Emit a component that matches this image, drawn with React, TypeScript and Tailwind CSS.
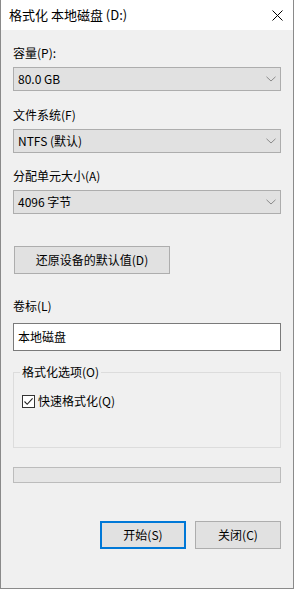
const font = { fontFamily: '"Noto Sans CJK SC", "Noto Sans", sans-serif' };

function Chevron() {
  return (
    <svg width="10" height="6" viewBox="0 0 10 6" className="text-[#8a8a8a]">
      <path d="M0.5 0.8 L5 5 L9.5 0.8" fill="none" stroke="currentColor" strokeWidth="1" />
    </svg>
  );
}

function Combo({ value, className = '' }: { value: string; className?: string }) {
  return (
    <div
      className={`flex h-[24px] items-center justify-between border border-[#adadad] bg-[#e1e1e1] pl-[4px] pr-[4px] ${className}`}
    >
      <span className="leading-[16px]">{value}</span>
      <Chevron />
    </div>
  );
}

function Field({ label, value, className = '' }: { label: string; value: string; className?: string }) {
  return (
    <div className={className}>
      <div className="leading-[16px]">{label}</div>
      <Combo value={value} className="mt-[6px]" />
    </div>
  );
}

function Btn({ label, primary = false }: { label: string; primary?: boolean }) {
  return (
    <button
      className={`flex h-[28px] w-[86px] items-center justify-center bg-[#e1e1e1] leading-[16px] ${
        primary ? 'border-2 border-[#0078d7]' : 'border border-[#adadad]'
      }`}
    >
      {label}
    </button>
  );
}

export default function App() {
  return (
    <div
      className="flex h-[589px] w-[294px] flex-col border-x border-b border-[#8a8a8a] bg-[#f0f0f0] text-[12px] text-black"
      style={font}
    >
      {/* title bar */}
      <div className="flex h-[30px] shrink-0 items-center justify-between bg-white pl-[8px] pr-[10px]">
        <span className="text-[13px] leading-[16px]">格式化 本地磁盘 (D:)</span>
        <svg width="11" height="11" viewBox="0 0 11 11" className="text-black">
          <path d="M0.5 0.5 L10.5 10.5 M10.5 0.5 L0.5 10.5" stroke="currentColor" strokeWidth="1" />
        </svg>
      </div>

      <div className="flex flex-1 flex-col px-[12px] pt-[15px]">
        <Field label="容量(P):" value="80.0 GB" />
        <Field label="文件系统(F)" value="NTFS (默认)" className="mt-[16px]" />
        <Field label="分配单元大小(A)" value="4096 字节" className="mt-[15px]" />

        <button className="mt-[32px] ml-[1px] flex h-[28px] w-[156px] items-center justify-center border border-[#adadad] bg-[#e1e1e1] leading-[16px]">
          还原设备的默认值(D)
        </button>

        <div className="mt-[24px] leading-[16px]">卷标(L)</div>
        <div className="mt-[9px] flex h-[28px] items-center border border-[#7a7a7a] bg-white pl-[4px] leading-[16px]">
          本地磁盘
        </div>

        <fieldset className="mt-[13px] h-[84px] border border-[#dcdcdc] px-[8px] pb-0 pt-[13px]">
          <legend className="-ml-[2px] px-[2px] leading-[16px]">格式化选项(O)</legend>
          <label className="flex items-center gap-[3px] leading-[16px]">
            <span className="flex h-[13px] w-[13px] items-center justify-center border border-[#333] bg-white">
              <svg width="11" height="11" viewBox="0 0 11 11">
                <path d="M1.5 5.5 L4.2 8.3 L9.6 2.4" fill="none" stroke="#222" strokeWidth="1.1" />
              </svg>
            </span>
            快速格式化(Q)
          </label>
        </fieldset>

        <div className="mt-[19px] h-[16px] border border-[#bcbcbc] bg-[#e6e6e6]" />

        <div className="mt-[38px] flex justify-end gap-[9px]">
          <Btn label="开始(S)" primary />
          <Btn label="关闭(C)" />
        </div>
      </div>
    </div>
  );
}
